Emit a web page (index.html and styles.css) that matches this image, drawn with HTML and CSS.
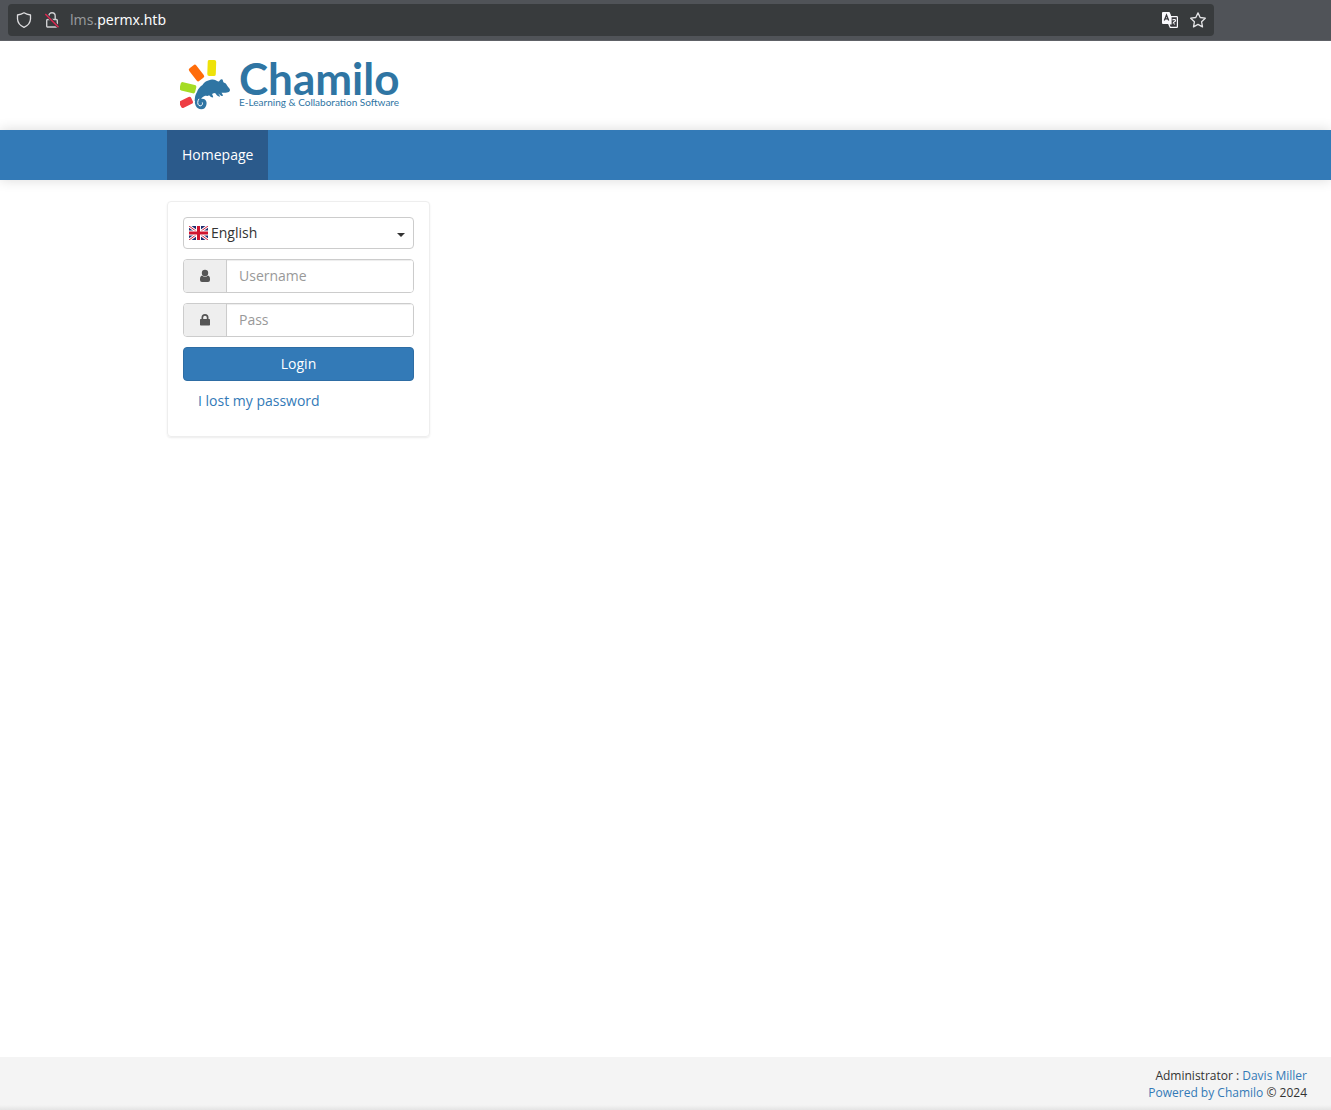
FILE: index.html
```html
<!DOCTYPE html>
<html lang="en">
<head>
<meta charset="utf-8">
<title>Chamilo</title>
<link rel="stylesheet" href="styles.css">
</head>
<body>
<div class="browser-bar">
  <div class="address">
    <svg class="icon" viewBox="0 0 16 16" fill="none" stroke="#dedee0" stroke-width="1.3" stroke-linejoin="round"><path d="M8 .8Q10.500 2.500 14.500 3v4q-.3 5.700-6.500 8.300Q1.800 12.700 1.500 7V3Q5.500 2.500 8 .8z"/></svg>
    <svg class="icon" viewBox="0 0 16 16" fill="none" stroke="#cfcfd1" stroke-width="1.400"><path d="M4.800 7V4a3.200 3.200 0 0 1 6.400 0v3"/><rect x="2.700" y="7.500" width="10.600" height="7.500" rx="1"/><path d="M1.500 2.200 14.500 15" stroke="#38383d" stroke-width="3"/><path d="M1.300 2 14.500 15.200" stroke="#e22850" stroke-width="1.400"/></svg>
    <span class="url"><span class="subdomain">lms.</span>permx.htb</span>
    <svg class="icon" viewBox="0 0 16 16"><path fill="#fbfbfe" d="M1 0h6.500l1.500 3.300V12H1a1 1 0 0 1-1-1V1a1 1 0 0 1 1-1z"/><path d="M2.300 8.500 4.500 3l2.200 5.500M3 6.800h3" fill="none" stroke="#38383d" stroke-width="1.300"/><path d="M9 4.600h5.700a.7.7 0 0 1 .7.700v9.400a.7.7 0 0 1-.7.700H8.300L6.800 12H9z" fill="#38383d" stroke="#fbfbfe" stroke-width="1.200"/><path d="M10.500 7.800q3-.8 3 .7 0 1-1.500 1.500l-1 1.500M12.500 11.500v1" fill="none" stroke="#fbfbfe" stroke-width="1.200"/></svg>
    <svg class="icon" viewBox="0 0 16 16" fill="none" stroke="#e4e4e6" stroke-width="1.300" stroke-linejoin="round"><path d="m8 .9 2.200 4.600 5.100.7-3.700 3.600.9 5.100L8 12.400l-4.500 2.500.9-5.100L.7 6.200l5.100-.7z"/></svg>
  </div>
</div>

<header class="header">
  <div class="container">
    <a class="logo" href="#">
      <svg class="logo-mark" viewBox="0 0 51 51" aria-hidden="true">
        <rect x="27.500" y="0" width="8.500" height="16" rx="2" fill="#eee20a" transform="rotate(2 32 8)"/>
        <rect x="12" y="5" width="9" height="16" rx="2" fill="#ff6c0a" transform="rotate(-38 16.500 13)"/>
        <rect x="3.500" y="19.500" width="8.500" height="16" rx="2" fill="#a5dc24" transform="rotate(-76 8 27.500)"/>
        <rect x="2.500" y="35" width="7.500" height="13" rx="2" fill="#ee3d43" transform="rotate(-116 6.500 42)"/>
        <path fill="#2f75a3" d="M14.700 41C15 36 15.500 34.500 17 32c1-3 3-5.500 5.500-7C24 22 28 20 32 19.500c3-.2 4.500 1.500 6.300 2 1.200.2 2-2.500 3.700-2.200 1.200.5.800 2.200 1.700 3.300 2 .6 2.500 1.400 3.200 2.700 1.300 2 3.300 3.500 3.100 5-.3 1.700-1.700 2-3 2.200-2 .3-4 0-5.500.3.500 1.200 1.600 1.900 1.300 3.300-1.800-.1-3-1.500-4.300-2.700-.1 1.300 1.700 1.900 1.500 3.400-2.300-.1-3.700-2-4.900-3.700-1.200.2-2.100.4-3 1 .2 1.200 1.300 2 1 3.500-2.200-.1-3-1.200-4-2.300-1.200 1.100-2.700.5-4 .5-3 1-4 2.700-4.500 5z"/>
        <path d="M17 38.500c-1 5.500.5 9 4.300 9 3.500 0 4.700-5.300 1.900-6.800-2.700-1-4.200 2-2.500 3.700" fill="none" stroke="#2f75a3" stroke-width="3.600" stroke-linecap="round"/>
        <path d="M19 38.800c-1.700 2.500-1.700 5.400 0 6.700 1.700.8 3 0 3.300-1.200" fill="none" stroke="#fff" stroke-width="1"/>
      </svg>
      <span class="wordmark"><span class="brand">Chamilo</span><span class="tagline">E-Learning &amp; Collaboration Software</span></span>
    </a>
  </div>
</header>

<nav class="navbar">
  <div class="container"><a class="nav-link" href="#">Homepage</a></div>
</nav>

<main class="container main">
  <form class="login-card">
    <div class="language">
      <svg class="flag" viewBox="0 0 19 14" aria-hidden="true"><path fill="#1f2e70" d="M0 0h19v14H0z"/><path d="m0 0 19 14M19 0 0 14" stroke="#fff" stroke-width="3"/><path d="m0 0 19 14M19 0 0 14" stroke="#d21c3b"/><path d="M9.500 0v14M0 7h19" stroke="#fff" stroke-width="5"/><path d="M9.500 0v14M0 7h19" stroke="#d0142f" stroke-width="3"/></svg>
      <select class="language-select" aria-label="Language"><option>English</option></select>
      <svg class="caret" viewBox="0 0 8 4" aria-hidden="true"><path d="M0 0h8L4 4z" fill="#333"/></svg>
    </div>
    <div class="field">
      <label class="addon" for="login" aria-label="Username"><svg class="addon-icon" viewBox="0 0 12 14"><circle cx="6" cy="4" r="3.200"/><path d="M3 6.500C1 7 1 9 1 11q0 2 2 2h6q2 0 2-2c0-2 0-4-2-4.500a4 4 0 0 1-6 0z"/></svg></label>
      <input class="input" id="login" type="text" placeholder="Username">
    </div>
    <div class="field">
      <label class="addon" for="password" aria-label="Password"><svg class="addon-icon" viewBox="0 0 12 14"><path fill-rule="evenodd" d="M2.500 6V4.500a3.500 3.500 0 0 1 7 0V6h.7q.8 0 .8.800v4.900q0 .8-.8.800H1.800q-.8 0-.8-.8V6.800q0-.8.800-.8zM4.200 6h3.600V4.500a1.800 1.800 0 0 0-3.600 0z"/></svg></label>
      <input class="input" id="password" type="password" placeholder="Pass">
    </div>
    <button class="login-button" type="submit">Login</button>
    <a class="lost-link" href="#">I lost my password</a>
  </form>
</main>

<footer class="footer">
  <div>Administrator : <a href="#">Davis Miller</a></div>
  <div><a href="#">Powered by Chamilo</a> © 2024</div>
</footer>
</body>
</html>
```
FILE: styles.css
```css
* { box-sizing: border-box; }
body {
  margin: 0;
  min-height: 100vh;
  display: flex;
  flex-direction: column;
  background: #fff;
  color: #333;
  font: 14px/20px "Open Sans", "Noto Sans", sans-serif;
}
a { color: #337ab7; text-decoration: none; }
svg { display: block; flex: none; }

.browser-bar {
  padding: 4px 117px 4px 8px;
  background: #505358;
  border-bottom: 1px solid #5e6166;
}
.address {
  height: 32px;
  padding: 0 8px;
  display: flex;
  align-items: center;
  gap: 12px;
  border-radius: 4px;
  background: #383b3d;
  color: #fbfbfe;
  font-family: "Noto Sans", sans-serif;
}
.icon { width: 16px; height: 16px; }
.url { flex: 1; margin-left: -2px; }
.subdomain { color: #96989a; }

.container { width: 100%; max-width: 997px; margin: 0 auto; }
.header { padding: 19px 0; }
.logo { display: flex; gap: 8px; padding-left: 13px; color: #2f75a3; }
.logo-mark { width: 51px; height: 51px; }
.wordmark { display: flex; flex-direction: column; }
.brand { font: bold 44px/36px Lato, sans-serif; }
.tagline { font: 10px/12px Lato, sans-serif; white-space: nowrap; }

.navbar {
  background: #337ab7;
  box-shadow: 0 0 12px rgba(0, 0, 0, .15);
}
.nav-link {
  display: inline-block;
  padding: 15px;
  background: #2b5a8b;
  color: #fff;
  vertical-align: top;
}

.main { flex: 1; padding: 21px 0; }
.login-card {
  width: 263px;
  padding: 15px 15px 25px;
  display: flex;
  flex-direction: column;
  gap: 10px;
  border: 1px solid #eee;
  border-radius: 4px;
  box-shadow: 0 1px 2px rgba(0, 0, 0, .08);
}
.language {
  height: 32px;
  padding: 0 8px 0 5px;
  display: flex;
  align-items: center;
  gap: 3px;
  border: 1px solid #ccc;
  border-radius: 4px;
}
.flag { width: 19px; height: 14px; }
.caret { width: 8px; height: 4px; margin-top: 3px; }
.language-select {
  flex: 1;
  min-width: 0;
  padding: 0;
  appearance: none;
  border: 0;
  background: none;
  color: #333;
  font: inherit;
}
.field {
  height: 34px;
  display: flex;
  border: 1px solid #ccc;
  border-radius: 4px;
  overflow: hidden;
}
.addon {
  width: 43px;
  display: flex;
  align-items: center;
  justify-content: center;
  border-right: 1px solid #ccc;
  background: #eee;
}
.addon-icon { width: 12px; height: 14px; fill: #555; }
.input {
  flex: 1;
  min-width: 0;
  padding: 0 12px;
  border: 0;
  background: #fff;
  box-shadow: inset 0 1px 1px rgba(0, 0, 0, .075);
  color: #555;
  font: inherit;
}
.input::placeholder { color: #999; }
.login-button {
  height: 34px;
  border: 1px solid #2e6da4;
  border-radius: 4px;
  background: #337ab7;
  color: #fff;
  font: inherit;
}
.lost-link { padding-left: 15px; }

.footer {
  padding: 10px 24px 9px;
  background: linear-gradient(to top, #e4e4e4, #f4f4f4 5px);
  text-align: right;
  font-size: 12px;
  line-height: 17px;
}
```
